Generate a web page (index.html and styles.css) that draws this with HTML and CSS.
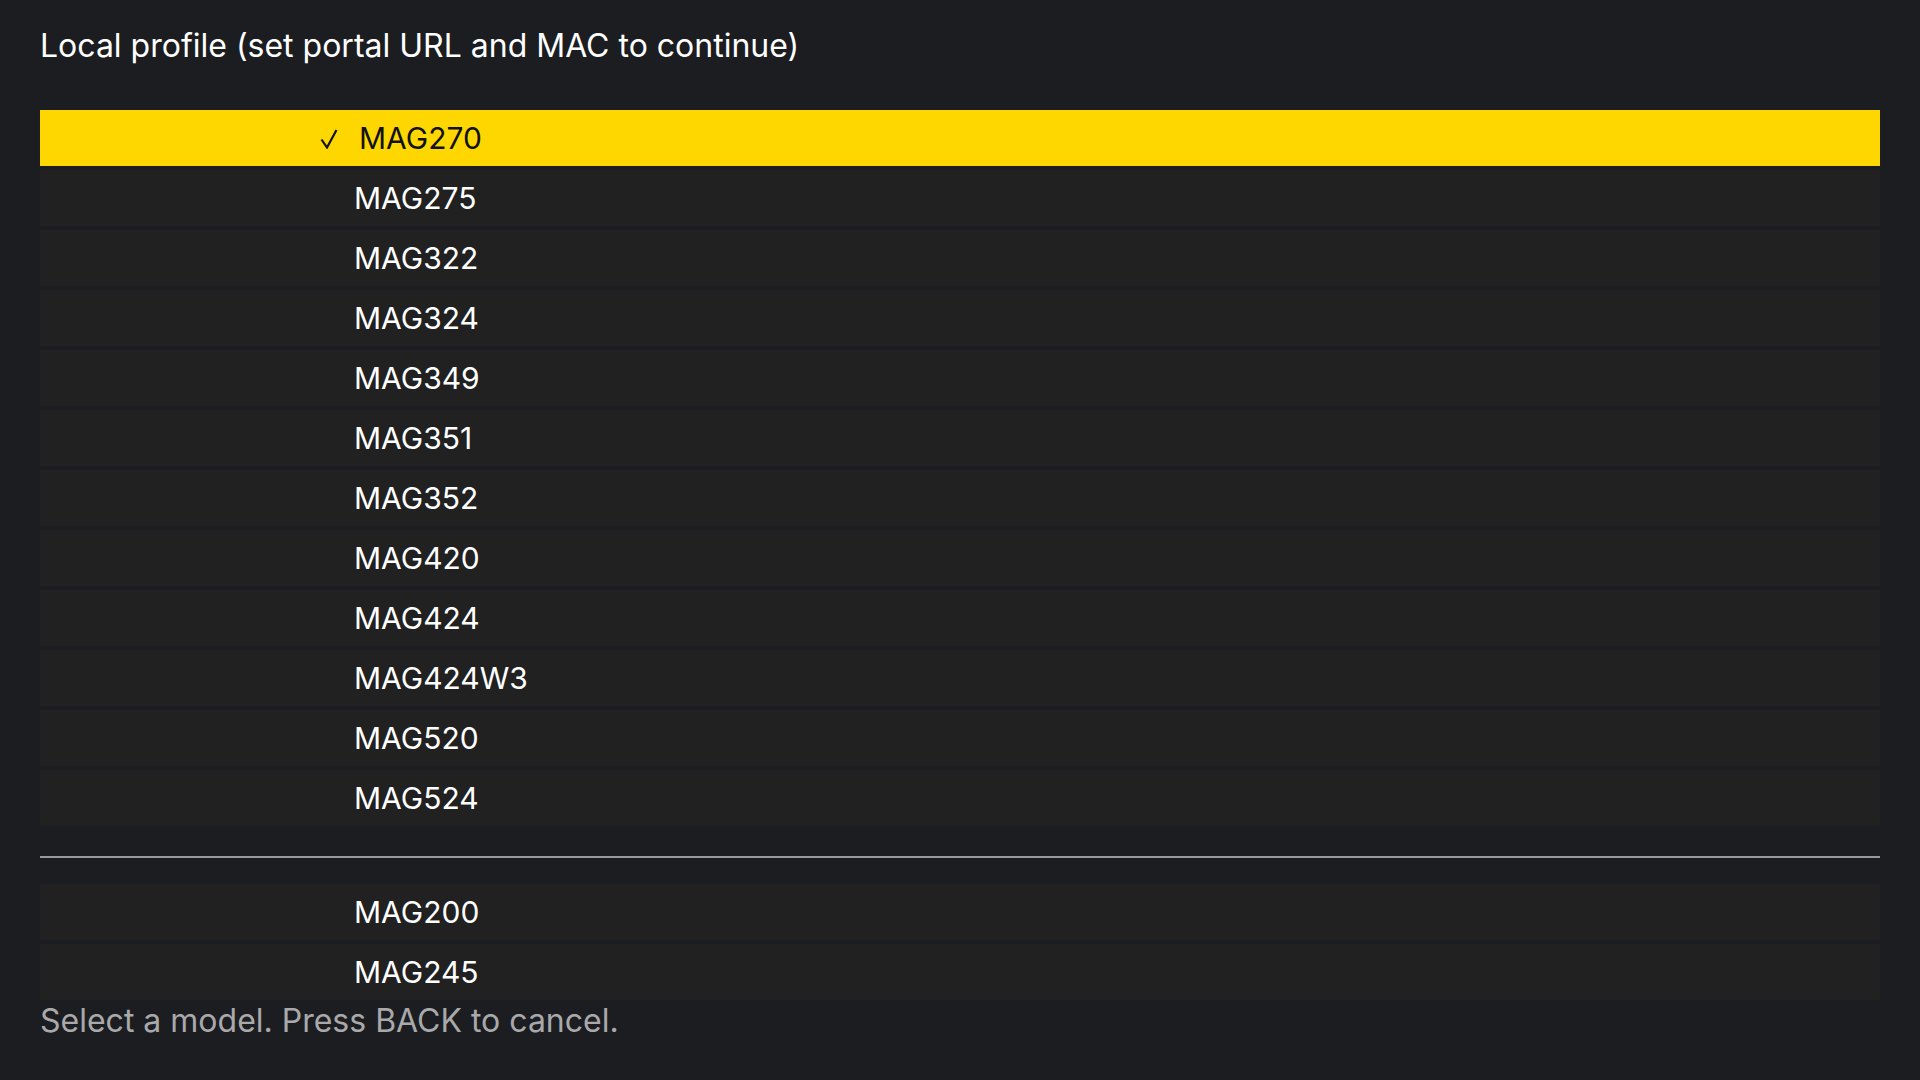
FILE: index.html
```html
<!DOCTYPE html>
<html lang="en">
<head>
    <meta charset="UTF-8">
    <meta name="viewport" content="width=device-width, initial-scale=1.0">
    <title>Select model</title>
    <link rel="stylesheet" href="styles.css">
</head>
<body>
    <div id="screen">
        <div class="title">Local profile (set portal URL and MAC to continue)</div>

        <ul class="models">
            <li class="model selected">
                <span class="check"><svg width="18" height="20" viewBox="0 0 18 20"><path d="M1.5 10.5 L7 18.5 L16.5 1" fill="none" stroke="#111" stroke-width="2.2"/></svg></span>
                <span class="name">MAG270</span>
            </li>
            <li class="model"><span class="check"></span><span class="name">MAG275</span></li>
            <li class="model"><span class="check"></span><span class="name">MAG322</span></li>
            <li class="model"><span class="check"></span><span class="name">MAG324</span></li>
            <li class="model"><span class="check"></span><span class="name">MAG349</span></li>
            <li class="model"><span class="check"></span><span class="name">MAG351</span></li>
            <li class="model"><span class="check"></span><span class="name">MAG352</span></li>
            <li class="model"><span class="check"></span><span class="name">MAG420</span></li>
            <li class="model"><span class="check"></span><span class="name">MAG424</span></li>
            <li class="model"><span class="check"></span><span class="name">MAG424W3</span></li>
            <li class="model"><span class="check"></span><span class="name">MAG520</span></li>
            <li class="model"><span class="check"></span><span class="name">MAG524</span></li>
        </ul>

        <hr class="divider">

        <!-- legacy boxes -->
        <ul class="models">
            <li class="model"><span class="check"></span><span class="name">MAG200</span></li>
            <li class="model"><span class="check"></span><span class="name">MAG245</span></li>
        </ul>

        <div class="hint">Select a model. Press BACK to cancel.</div>
    </div>
</body>
</html>
```

FILE: styles.css
```css
body {
    margin: 0;
    font-family: Inter, "Noto Sans", sans-serif;
    background-color: #1c1d20;
    color: #fff;
}

#screen {
    padding: 26px 40px 0 40px;
}

.title {
    font-size: 32px;
    line-height: 39px;
    margin-bottom: 45px;
}

.models {
    list-style: none;
    margin: 0;
    padding: 0;
}

.model {
    display: flex;
    align-items: center;
    height: 56px;
    margin-bottom: 4px;
    padding-left: 280px;
    background-color: #212121;
    font-size: 30px;
}

.model .check {
    width: 34px;
    display: flex;
    align-items: center;
}

.check svg {
    margin-top: 2px;
}

.selected {
    background-color: #ffd700;
    color: #111;
}

.selected .name {
    padding-left: 5px;
}

.divider {
    border: none;
    height: 2px;
    background-color: #9a9a9c;
    margin: 30px 0 26px 0;
}

.hint {
    font-size: 32px;
    line-height: 34px;
    color: #a9a9ab;
}
```
